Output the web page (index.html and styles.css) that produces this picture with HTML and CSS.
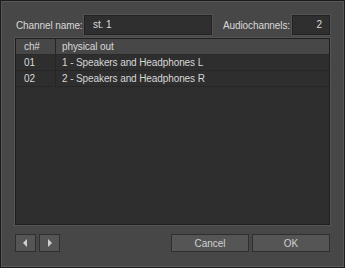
FILE: index.html
```html
<!DOCTYPE html>
<html lang="en">
<head>
    <meta charset="UTF-8">
    <title>Output Channel</title>
    <link rel="stylesheet" href="styles.css">
</head>
<body>
    <div class="dialog">
        <div class="top-row">
            <label class="field-label" for="chname">Channel name:</label>
            <div class="field name-field" id="chname">st. 1</div>
            <label class="field-label audio-label">Audiochannels:</label>
            <div class="field count-field">2</div>
        </div>

        <div class="table">
            <div class="row head">
                <div class="cell num">ch#</div>
                <div class="cell out">physical out</div>
            </div>
            <div class="row">
                <div class="cell num">01</div>
                <div class="cell out">1 - Speakers and Headphones L</div>
            </div>
            <div class="row">
                <div class="cell num">02</div>
                <div class="cell out">2 - Speakers and Headphones R</div>
            </div>
            <div class="row filler">
                <div class="cell num"></div>
                <div class="cell out"></div>
            </div>
        </div>

        <div class="bottom-row">
            <button class="btn arrow" type="button">
                <svg width="5" height="8" viewBox="0 0 5 8"><path d="M4 0 L0 4 L4 8 Z" fill="#cfcfcf"/></svg>
            </button>
            <button class="btn arrow" type="button">
                <svg width="5" height="8" viewBox="0 0 5 8"><path d="M1 0 L5 4 L1 8 Z" fill="#cfcfcf"/></svg>
            </button>
            <div class="spacer"></div>
            <button class="btn wide" type="button">Cancel</button>
            <button class="btn wide" type="button">OK</button>
        </div>
    </div>
</body>
</html>
```

FILE: styles.css
```css
body {
    margin: 0;
    padding: 0;
    background: #2a2a2a;
    font-family: 'Liberation Sans', Arial, sans-serif;
    font-size: 10px;
    letter-spacing: -0.1px;
    color: #d8d8d8;
}

.dialog {
    box-sizing: border-box;
    width: 345px;
    height: 268px;
    border: 1px solid #1c1c1c;
    box-shadow: inset 0 0 0 1px #575757;
    background: #474747;
    padding: 14px 14px 15px 14px;
    display: flex;
    flex-direction: column;
}

.top-row {
    display: flex;
    align-items: center;
    height: 20px;
    white-space: nowrap;
}

.field-label {
    padding-left: 1px;
    width: 68px;
    flex: none;
}

.audio-label {
    width: 62px;
    padding-left: 0;
    margin-left: 11px;
    margin-right: 7px;
}

.field {
    box-sizing: border-box;
    height: 20px;
    line-height: 18px;
    background: #2f2f2f;
    border: 1px solid #222;
    box-shadow: 0 0 0 1px #525252;
    color: #dcdcdc;
}

.name-field {
    width: 128px;
    padding-left: 8px;
}

.count-field {
    width: 38px;
    text-align: right;
    padding-right: 7px;
}

.table {
    margin-top: 3px;
    height: 188px;
    box-sizing: border-box;
    background: #2e2e2e;
    border: 1px solid #1f1f1f;
    box-shadow: 0 0 0 1px #555;
    display: flex;
    flex-direction: column;
}

.row {
    display: flex;
    height: 15px;
    line-height: 15px;
    border-bottom: 1px solid #262626;
    white-space: nowrap;
}

.row.head {
    background: #474747;
    border-bottom: 1px solid #2a2a2a;
}

.row.filler {
    flex: 1;
    border-bottom: none;
}

.cell.num {
    width: 40px;
    box-sizing: border-box;
    padding-left: 8px;
    border-right: 1px solid #262626;
}

.row.filler .cell.num {
    border-right: none;
}

.cell.out {
    padding-left: 6px;
}

.bottom-row {
    margin-top: 9px;
    display: flex;
    height: 18px;
}

.btn {
    box-sizing: border-box;
    height: 18px;
    margin: 0;
    padding: 0;
    background: #555;
    border: 1px solid #2f2f2f;
    color: #d0d0d0;
    font-family: 'Liberation Sans', Arial, sans-serif;
    font-size: 10px;
    display: flex;
    align-items: center;
    justify-content: center;
}

.arrow {
    width: 21px;
    margin-right: 3px;
}

.spacer {
    flex: 1;
}

.wide {
    width: 78px;
    margin-left: 3px;
}
```
